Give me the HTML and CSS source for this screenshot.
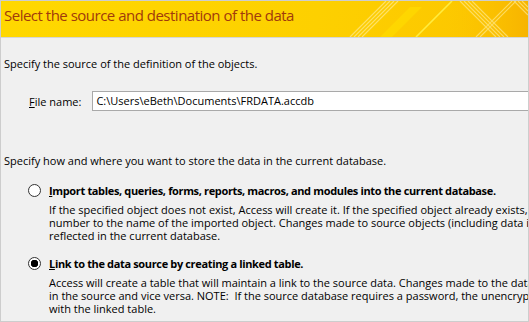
FILE: index.html
```html
<!DOCTYPE html>
<html lang="en">

<head>
    <meta charset="UTF-8">
    <title>Get External Data - Access Database</title>
    <link rel="stylesheet" href="styles.css">
</head>

<body>
    <div class="dialog">
        <div class="banner">
            <h1>Select the source and destination of the data</h1>
            <!-- decorative stripes on the right of the banner -->
            <svg class="stripes" width="200" height="36" viewBox="0 0 200 36">
                <defs>
                    <linearGradient id="edge" x1="0" y1="0" x2="1" y2="0">
                        <stop offset="0" stop-color="#fcc400" stop-opacity="0"/>
                        <stop offset="1" stop-color="#f7b400"/>
                    </linearGradient>
                </defs>
                <rect x="120" y="0" width="80" height="36" fill="url(#edge)"/>
                <g stroke="#ffe680" stroke-width="1.2" opacity="0.8">
                    <line x1="22" y1="36" x2="58" y2="0"/>
                    <line x1="26" y1="36" x2="62" y2="0"/>
                    <line x1="30" y1="36" x2="66" y2="0"/>
                    <line x1="34" y1="36" x2="70" y2="0"/>
                </g>
                <polygon points="52,36 82,6 94,6 64,36" fill="#ffe000" opacity="0.55"/>
                <line x1="88" y1="36" x2="124" y2="0" stroke="#ffec40" stroke-width="1.6"/>
                <g stroke="#ffe680" stroke-width="1.2" opacity="0.75">
                    <line x1="132" y1="0" x2="168" y2="36"/>
                    <line x1="136" y1="0" x2="172" y2="36"/>
                    <line x1="140" y1="0" x2="176" y2="36"/>
                    <line x1="144" y1="0" x2="180" y2="36"/>
                    <line x1="148" y1="36" x2="184" y2="0"/>
                    <line x1="152" y1="36" x2="188" y2="0"/>
                    <line x1="186" y1="0" x2="200" y2="14"/>
                    <line x1="190" y1="0" x2="200" y2="10"/>
                    <line x1="194" y1="0" x2="200" y2="6"/>
                </g>
            </svg>
        </div>

        <div class="content">
            <p class="intro">Specify the source of the definition of the objects.</p>

            <div class="file-row">
                <label for="file-name"><u>F</u>ile name:</label>
                <div class="file-input" id="file-name">C:\Users\eBeth\Documents\FRDATA.accdb</div>
            </div>

            <p class="intro intro-store">Specify how and where you want to store the data in the current database.</p>

            <div class="option">
                <span class="radio"></span>
                <div class="option-body">
                    <div class="option-title"><u>I</u>mport tables, queries, forms, reports, macros, and modules into the current database.</div>
                    <div class="option-desc">
                        If the specified object does not exist, Access will create it. If the specified object already exists, Access will append a<br>
                        number to the name of the imported object. Changes made to source objects (including data in tables) will not be<br>
                        reflected in the current database.
                    </div>
                </div>
            </div>

            <div class="option option-link">
                <span class="radio checked"></span>
                <div class="option-body">
                    <div class="option-title"><u>L</u>ink to the data source by creating a linked table.</div>
                    <div class="option-desc">
                        Access will create a table that will maintain a link to the source data. Changes made to the data in Access will be reflected<br>
                        in the source and vice versa. NOTE:&nbsp; If the source database requires a password, the unencrypted password will be stored<br>
                        with the linked table.
                    </div>
                </div>
            </div>
        </div>
    </div>
</body>
</html>
```

FILE: styles.css
```css
* {
    margin: 0;
    padding: 0;
    box-sizing: border-box;
}

body {
    background-color: #f0f0f0;
    font-family: "Open Sans", "Liberation Sans", sans-serif;
    font-size: 11px;
    color: #000000;
}

.dialog {
    width: 529px;
    height: 322px;
    border: 1px solid #cdcdcd;
    background-color: #f0f0f0;
    overflow: hidden;
}

.banner {
    position: relative;
    height: 37px;
    background: linear-gradient(100deg, #ffd800 0%, #fdd000 60%, #fcc400 100%);
    border-bottom: 1px solid #d6d6d6;
    overflow: hidden;
}

.banner h1 {
    position: relative;
    z-index: 1;
    font-weight: normal;
    font-size: 15px;
    letter-spacing: -0.5px;
    line-height: 22px;
    padding: 3px 0 0 3px;
    color: #a13a0c;
    white-space: nowrap;
}

.stripes {
    position: absolute;
    top: 0;
    right: 0;
}

.content {
    padding: 18px 0 0 3px;
    white-space: nowrap;
}

.intro {
    line-height: 15px;
}

.file-row {
    display: flex;
    align-items: center;
    gap: 11px;
    margin-top: 20px;
    padding-left: 25px;
}

.file-input {
    flex: 1;
    height: 20px;
    line-height: 18px;
    padding-left: 3px;
    background-color: #ffffff;
    border: 1px solid #a9a9a9;
    border-right: none;
}

.intro-store {
    margin-top: 42px;
}

.option {
    display: flex;
    align-items: flex-start;
    gap: 8px;
    margin-top: 15px;
    padding-left: 24px;
}

.option-link {
    margin-top: 14px;
}

.radio {
    flex: none;
    width: 13px;
    height: 13px;
    margin-top: 1px;
    border: 1px solid #333333;
    border-radius: 50%;
    background-color: #ffffff;
}

.radio.checked {
    background: radial-gradient(circle, #000000 0 3.5px, #ffffff 4px);
}

.option-title {
    font-weight: bold;
    letter-spacing: -0.35px;
    line-height: 15px;
}

.option-desc {
    margin-top: 5px;
    line-height: 13px;
}
```
